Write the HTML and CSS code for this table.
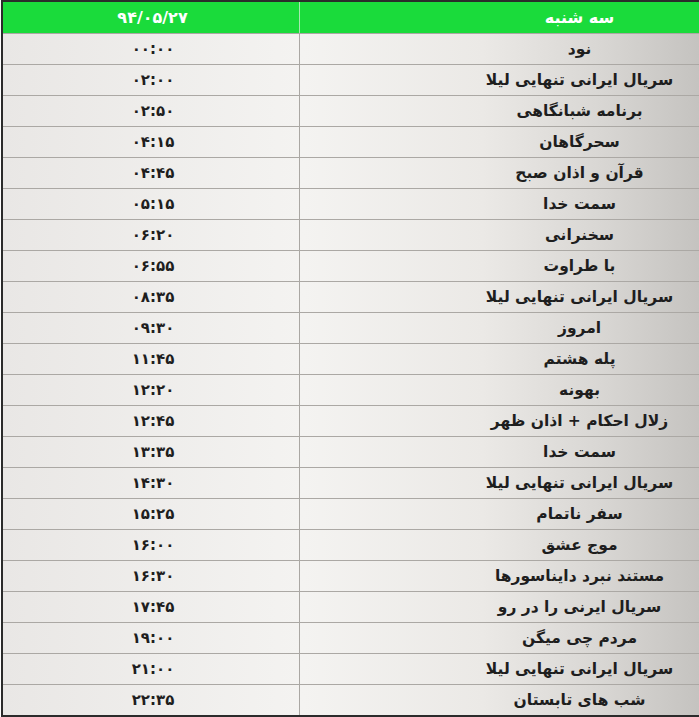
FILE: index.html
```html
<!DOCTYPE html>
<html lang="fa">
<head>
<meta charset="utf-8">
<title>جدول پخش</title>
<link rel="stylesheet" href="styles.css">
</head>
<body>
<div class="schedule">
  <div class="row head">
    <div class="cell time">۹۴/۰۵/۲۷</div>
    <div class="cell name">سه شنبه</div>
  </div>
  <div class="row"><div class="cell time">۰۰:۰۰</div><div class="cell name">نود</div></div>
  <div class="row"><div class="cell time">۰۲:۰۰</div><div class="cell name">سریال ایرانی تنهایی لیلا</div></div>
  <div class="row"><div class="cell time">۰۲:۵۰</div><div class="cell name">برنامه شبانگاهی</div></div>
  <div class="row"><div class="cell time">۰۴:۱۵</div><div class="cell name">سحرگاهان</div></div>
  <div class="row"><div class="cell time">۰۴:۴۵</div><div class="cell name">قرآن و اذان صبح</div></div>
  <div class="row"><div class="cell time">۰۵:۱۵</div><div class="cell name">سمت خدا</div></div>
  <div class="row"><div class="cell time">۰۶:۲۰</div><div class="cell name">سخنرانی</div></div>
  <div class="row"><div class="cell time">۰۶:۵۵</div><div class="cell name">با طراوت</div></div>
  <div class="row"><div class="cell time">۰۸:۳۵</div><div class="cell name">سریال ایرانی تنهایی لیلا</div></div>
  <div class="row"><div class="cell time">۰۹:۳۰</div><div class="cell name">امروز</div></div>
  <div class="row"><div class="cell time">۱۱:۴۵</div><div class="cell name">پله هشتم</div></div>
  <div class="row"><div class="cell time">۱۲:۲۰</div><div class="cell name">بهونه</div></div>
  <div class="row"><div class="cell time">۱۲:۴۵</div><div class="cell name">زلال احکام + اذان ظهر</div></div>
  <div class="row"><div class="cell time">۱۳:۳۵</div><div class="cell name">سمت خدا</div></div>
  <div class="row"><div class="cell time">۱۴:۳۰</div><div class="cell name">سریال ایرانی تنهایی لیلا</div></div>
  <div class="row"><div class="cell time">۱۵:۲۵</div><div class="cell name">سفر ناتمام</div></div>
  <div class="row"><div class="cell time">۱۶:۰۰</div><div class="cell name">موج عشق</div></div>
  <div class="row"><div class="cell time">۱۶:۳۰</div><div class="cell name">مستند نبرد دایناسورها</div></div>
  <div class="row"><div class="cell time">۱۷:۴۵</div><div class="cell name">سریال ایرنی را در رو</div></div>
  <div class="row"><div class="cell time">۱۹:۰۰</div><div class="cell name">مردم چی میگن</div></div>
  <div class="row"><div class="cell time">۲۱:۰۰</div><div class="cell name">سریال ایرانی تنهایی لیلا</div></div>
  <div class="row"><div class="cell time">۲۲:۳۵</div><div class="cell name">شب های تابستان</div></div>
</div>
</body>
</html>
```
FILE: styles.css
```css
html, body {
  margin: 0;
  padding: 0;
  overflow: hidden;
  background: #ffffff;
}

body {
  font-family: "DejaVu Sans", "Noto Sans", sans-serif;
  color: #1e1e1e;
}

.schedule {
  margin-left: 1px;
  width: 698px;
  border: 2px solid #2b2b2b;
  border-right: none;
  box-sizing: border-box;
  display: flex;
  flex-direction: column;
}

.row {
  display: grid;
  grid-template-columns: 297px 1fr;
  height: 30px;
  border-top: 1px solid #aba8a4;
  background: linear-gradient(to right, #e9e7e5 0px, #f4f3f1 300px, #ebe9e6 480px, #d8d6d3 600px, #c4c2bf 700px);
}

.row.head {
  height: 31px;
  border-top: none;
  background: #1adb3b;
  color: #ffffff;
}

.cell {
  display: flex;
  align-items: center;
  justify-content: center;
  font-size: 15px;
  font-weight: bold;
}

.time {
  direction: ltr;
  border-right: 1px solid #aaa7a3;
  letter-spacing: 4px;
  padding-left: 4px;
}

.name {
  direction: rtl;
  font-size: 15.5px;
  padding-left: 160px;
}

.head .time {
  border-right-color: #a7e8b0;
  font-size: 16px;
  letter-spacing: 3px;
  padding-left: 3px;
}

.head .name {
  font-size: 16px;
}
```
